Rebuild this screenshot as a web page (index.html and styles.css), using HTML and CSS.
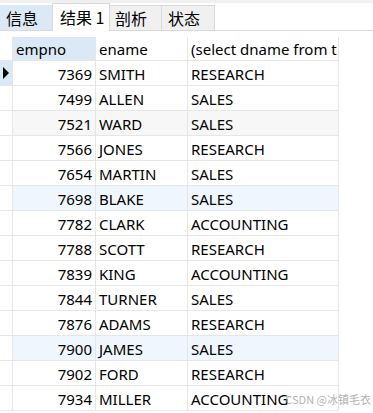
FILE: index.html
```html
<!DOCTYPE html>
<html lang="zh">
<head>
    <meta charset="UTF-8">
    <title>结果 1</title>
    <link rel="stylesheet" href="styles.css">
</head>
<body>
    <!-- Top strip and result tabs -->
    <div class="top-strip"></div>
    <div class="tab-bar">
        <div class="tab tab-info">信息</div>
        <div class="tab tab-active">结果 1</div>
        <div class="tab tab-plain">剖析</div>
        <div class="tab tab-plain">状态</div>
    </div>

    <!-- Result grid -->
    <div class="grid">
        <div class="grid-row header-row">
            <div class="cell marker"></div>
            <div class="cell col-empno header-selected">empno</div>
            <div class="cell col-ename">ename</div>
            <div class="cell col-dname">(select dname from t</div>
        </div>
        <div class="grid-row">
            <div class="cell marker current"><span class="arrow"></span></div>
            <div class="cell col-empno num">7369</div>
            <div class="cell col-ename">SMITH</div>
            <div class="cell col-dname">RESEARCH</div>
        </div>
        <div class="grid-row">
            <div class="cell marker"></div>
            <div class="cell col-empno num">7499</div>
            <div class="cell col-ename">ALLEN</div>
            <div class="cell col-dname">SALES</div>
        </div>
        <div class="grid-row row-grey">
            <div class="cell marker"></div>
            <div class="cell col-empno num">7521</div>
            <div class="cell col-ename">WARD</div>
            <div class="cell col-dname">SALES</div>
        </div>
        <div class="grid-row">
            <div class="cell marker"></div>
            <div class="cell col-empno num">7566</div>
            <div class="cell col-ename">JONES</div>
            <div class="cell col-dname">RESEARCH</div>
        </div>
        <div class="grid-row">
            <div class="cell marker"></div>
            <div class="cell col-empno num">7654</div>
            <div class="cell col-ename">MARTIN</div>
            <div class="cell col-dname">SALES</div>
        </div>
        <div class="grid-row row-blue">
            <div class="cell marker"></div>
            <div class="cell col-empno num">7698</div>
            <div class="cell col-ename">BLAKE</div>
            <div class="cell col-dname">SALES</div>
        </div>
        <div class="grid-row">
            <div class="cell marker"></div>
            <div class="cell col-empno num">7782</div>
            <div class="cell col-ename">CLARK</div>
            <div class="cell col-dname">ACCOUNTING</div>
        </div>
        <div class="grid-row">
            <div class="cell marker"></div>
            <div class="cell col-empno num">7788</div>
            <div class="cell col-ename">SCOTT</div>
            <div class="cell col-dname">RESEARCH</div>
        </div>
        <div class="grid-row">
            <div class="cell marker"></div>
            <div class="cell col-empno num">7839</div>
            <div class="cell col-ename">KING</div>
            <div class="cell col-dname">ACCOUNTING</div>
        </div>
        <div class="grid-row">
            <div class="cell marker"></div>
            <div class="cell col-empno num">7844</div>
            <div class="cell col-ename">TURNER</div>
            <div class="cell col-dname">SALES</div>
        </div>
        <div class="grid-row">
            <div class="cell marker"></div>
            <div class="cell col-empno num">7876</div>
            <div class="cell col-ename">ADAMS</div>
            <div class="cell col-dname">RESEARCH</div>
        </div>
        <div class="grid-row row-blue">
            <div class="cell marker"></div>
            <div class="cell col-empno num">7900</div>
            <div class="cell col-ename">JAMES</div>
            <div class="cell col-dname">SALES</div>
        </div>
        <div class="grid-row">
            <div class="cell marker"></div>
            <div class="cell col-empno num">7902</div>
            <div class="cell col-ename">FORD</div>
            <div class="cell col-dname">RESEARCH</div>
        </div>
        <div class="grid-row">
            <div class="cell marker"></div>
            <div class="cell col-empno num">7934</div>
            <div class="cell col-ename">MILLER</div>
            <div class="cell col-dname">ACCOUNTING</div>
        </div>
    </div>

    <!-- Watermark over the bottom right corner -->
    <div class="watermark">CSDN @冰镇毛衣</div>
</body>
</html>
```

FILE: styles.css
```css
/* Page base */
body {
    margin: 0;
    background: #ffffff;
    color: #000000;
    font-family: "Noto Sans", "Noto Sans CJK SC", sans-serif;
    font-size: 15px;
    height: 413px;
    overflow: hidden;
    position: relative;
}

/* Thin grey strip above the tabs */
.top-strip {
    height: 3px;
    background: #f0f0f0;
}

/* Tab bar */
.tab-bar {
    display: flex;
    align-items: flex-end;
    height: 27px;
    border-bottom: 1px solid #d9d9d9;
}

.tab {
    box-sizing: border-box;
    height: 25px;
    display: flex;
    align-items: center;
    font-family: "Noto Sans CJK SC", sans-serif;
    font-size: 16px;
    border-top: 1px solid #d9d9d9;
    border-right: 1px solid #d9d9d9;
}

.tab-info {
    width: 53px;
    padding-left: 6px;
    background: #dbe8f6;
    border-top-color: #dbe8f6;
}

.tab-active {
    width: 58px;
    height: 28px;
    margin-bottom: -1px;
    padding-left: 7px;
    padding-bottom: 2px;
    background: #ffffff;
    border-left: 1px solid #d9d9d9;
    margin-left: -1px;
}

.tab-plain {
    width: 52px;
    padding-left: 5px;
    background: #f0f0f0;
}

.tab-plain:last-child {
    width: 53px;
    padding-left: 6px;
}

/* Result grid */
.grid {
    margin-top: 6px;
    width: 339px;
}

.grid-row {
    display: flex;
    height: 25px;
    box-sizing: border-box;
    border-bottom: 1px solid #e6e6e6;
}

.header-row {
    height: 24px;
}

.cell {
    box-sizing: border-box;
    display: flex;
    align-items: center;
    padding: 1px 3px 0;
    white-space: nowrap;
    overflow: hidden;
    border-left: 1px solid #e6e6e6;
}

.marker {
    width: 12px;
    padding: 0;
    border-left: none;
    background: #ffffff;
}

.marker.current {
    background: #dbe8f6;
}

.arrow {
    width: 0;
    height: 0;
    margin-left: 3px;
    border-top: 6px solid transparent;
    border-bottom: 6px solid transparent;
    border-left: 6px solid #000000;
}

.col-empno {
    width: 83px;
}

.col-ename {
    width: 92px;
}

.col-dname {
    width: 152px;
    border-right: 1px solid #e6e6e6;
}

.header-selected {
    background: #dbe8f6;
}

.num {
    justify-content: flex-end;
}

/* Row highlights */
.row-grey .cell:not(.marker) {
    background: #f7f7f7;
}

.row-blue .cell:not(.marker) {
    background: #f0f6fd;
}

/* Watermark */
.watermark {
    position: absolute;
    right: 2px;
    bottom: 6px;
    font-family: "Noto Sans CJK SC", sans-serif;
    font-size: 11px;
    color: rgba(150, 150, 150, 0.75);
}
```
